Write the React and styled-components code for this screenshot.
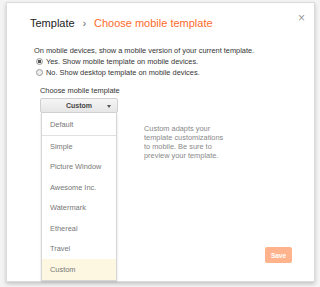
import React from 'react';
import styled, { createGlobalStyle } from 'styled-components';

const GlobalStyle = createGlobalStyle`
  html, body {
    margin: 0;
    padding: 0;
    background: #f4f4f4;
    font-family: Arial, "Liberation Sans", sans-serif;
  }
`;

const Page = styled.div`
  width: 320px;
  height: 287px;
  padding: 2px 6px 0 6px;
  box-sizing: border-box;
  overflow: hidden;
`;

const Dialog = styled.div`
  position: relative;
  width: 309px;
  height: 280px;
  box-sizing: border-box;
  background: #fff;
  border: 1px solid #dcdcdc;
  box-shadow: 0 2px 4px rgba(0, 0, 0, 0.2);
  padding: 14px 0 0 23px;
`;

const Close = styled.span`
  position: absolute;
  top: 9px;
  right: 9px;
  font-size: 12px;
  color: #999;
  line-height: 1;
`;

const Title = styled.h1`
  margin: 0;
  font-weight: normal;
  font-size: 11px;
  color: #222;
  display: flex;
  align-items: baseline;
  gap: 8px;
  height: 18px;
`;

const Crumb = styled.span`
  color: ${(p) => (p.$active ? '#ff6a2b' : '#222')};
`;

const Sep = styled.span`
  font-size: 10px;
  color: #555;
`;

const Intro = styled.p`
  margin: 11px 0 0 4px;
  font-size: 7.4px;
  color: #333;
  line-height: 10px;
`;

const Radio = styled.label`
  display: flex;
  align-items: center;
  gap: 3px;
  margin-left: 6px;
  font-size: 7.4px;
  color: #333;
  height: 11px;
`;

const Dot = styled.span`
  width: 5px;
  height: 5px;
  border-radius: 50%;
  border: 1px solid #999;
  background: ${(p) => (p.$checked ? 'radial-gradient(#555 40%, #eee 50%)' : '#eee')};
`;

const Body = styled.div`
  display: flex;
  margin-top: 8px;
  margin-left: 10px;
`;

const Picker = styled.div`
  display: flex;
  flex-direction: column;
  width: 78px;
`;

const Label = styled.div`
  font-size: 7.4px;
  color: #333;
  height: 12px;
  white-space: nowrap;
`;

const Select = styled.div`
  height: 15px;
  box-sizing: border-box;
  border: 1px solid #d0d0d0;
  border-radius: 2px;
  background: linear-gradient(#f5f5f5, #e6e6e6);
  display: flex;
  align-items: center;
  justify-content: center;
  position: relative;
  font-size: 7px;
  font-weight: bold;
  color: #444;
`;

const Caret = styled.span`
  position: absolute;
  right: 6px;
  top: 6px;
  border-left: 2.5px solid transparent;
  border-right: 2.5px solid transparent;
  border-top: 3px solid #555;
`;

const Menu = styled.ul`
  list-style: none;
  margin: 0 1px;
  padding: 0;
  border: 1px solid #d6d6d6;
  border-top: none;
  box-shadow: 0 1px 2px rgba(0, 0, 0, 0.15);
`;

const Item = styled.li`
  height: ${(p) => (p.$first ? 22 : 20.5)}px;
  display: flex;
  align-items: center;
  padding-left: 8px;
  font-size: 7.4px;
  color: #777;
  background: ${(p) => (p.$selected ? '#fdf7e2' : '#fff')};
  border-bottom: ${(p) => (p.$first ? '1px solid #e0e0e0' : 'none')};
`;

const Help = styled.p`
  margin: 38px 0 0 26px;
  width: 83px;
  font-size: 7.4px;
  line-height: 9px;
  color: #888;
`;

const Save = styled.button`
  position: absolute;
  right: 22px;
  bottom: 18px;
  width: 27px;
  height: 16px;
  border: none;
  border-radius: 2px;
  background: #ffb38d;
  color: #fff;
  font-family: Arial, "Liberation Sans", sans-serif;
  font-size: 6.5px;
  font-weight: bold;
  padding: 0;
`;

const templates = [
  'Default',
  'Simple',
  'Picture Window',
  'Awesome Inc.',
  'Watermark',
  'Ethereal',
  'Travel',
  'Custom',
];

export default function App() {
  return (
    <Page>
      <GlobalStyle />
      <Dialog>
        <Close>×</Close>
        <Title>
          <Crumb>Template</Crumb>
          <Sep>›</Sep>
          <Crumb $active>Choose mobile template</Crumb>
        </Title>
        <Intro>On mobile devices, show a mobile version of your current template.</Intro>
        <Radio>
          <Dot $checked />
          Yes. Show mobile template on mobile devices.
        </Radio>
        <Radio>
          <Dot />
          No. Show desktop template on mobile devices.
        </Radio>
        <Body>
          <Picker>
            <Label>Choose mobile template</Label>
            <Select>
              Custom
              <Caret />
            </Select>
            <Menu>
              {templates.map((t, i) => (
                <Item key={t} $first={i === 0} $selected={t === 'Custom'}>
                  {t}
                </Item>
              ))}
            </Menu>
          </Picker>
          <Help>
            Custom adapts your template customizations to mobile. Be sure to preview your template.
          </Help>
        </Body>
        <Save>Save</Save>
      </Dialog>
    </Page>
  );
}
